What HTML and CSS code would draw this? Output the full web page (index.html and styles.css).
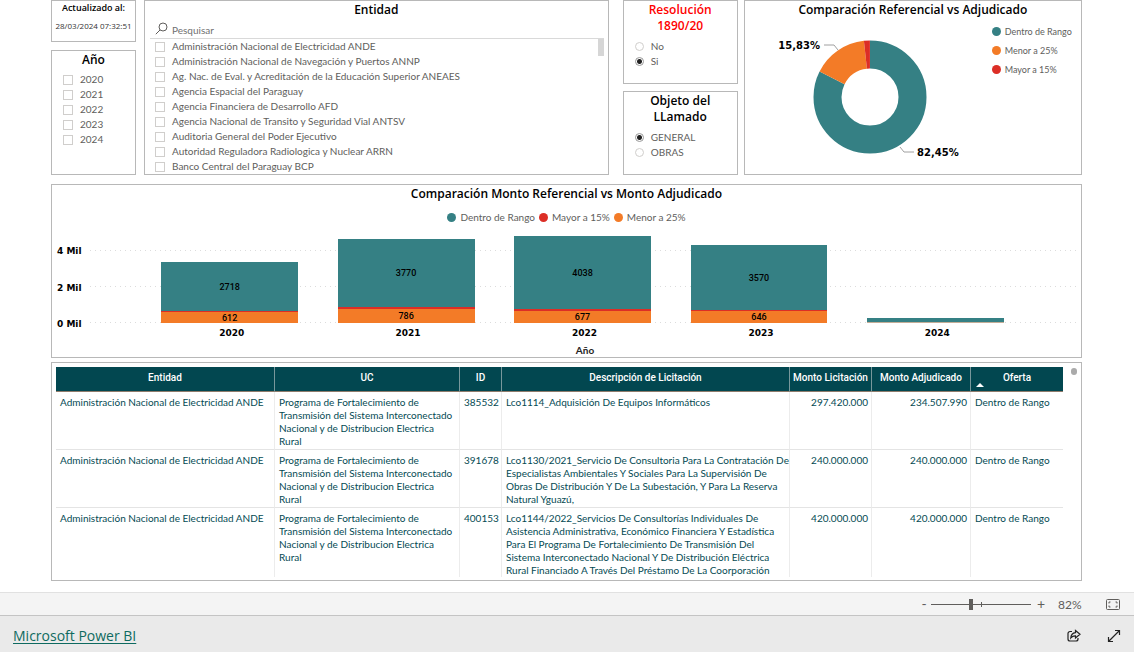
FILE: index.html
```html
<!DOCTYPE html>
<html lang="es">
<head>
<meta charset="utf-8">
<meta name="viewport" content="width=device-width, initial-scale=1">
<title>Microsoft Power BI</title>
<link rel="stylesheet" href="styles.css">
</head>
<body>
<main class="report">
  <div class="top-row">
    <div class="stack stack-year">
      <section class="card card-updated">
        <h2 class="mini-title">Actualizado al:</h2>
        <p class="timestamp">28/03/2024 07:32:51</p>
      </section>
      <fieldset class="card grow">
        <legend class="card-title">Año</legend>
        <div class="options options-year">
          <label class="option"><input type="checkbox">2020</label>
          <label class="option"><input type="checkbox">2021</label>
          <label class="option"><input type="checkbox">2022</label>
          <label class="option"><input type="checkbox">2023</label>
          <label class="option"><input type="checkbox">2024</label>
        </div>
      </fieldset>
    </div>

    <fieldset class="card card-entity">
      <legend class="card-title">Entidad</legend>
      <div class="search">
        <svg class="search-icon" viewBox="0 0 13 13" aria-hidden="true"><circle cx="8" cy="5" r="4"/><path d="M5 8L.8 12.2"/></svg>
        <input class="search-input" type="text" placeholder="Pesquisar" aria-label="Pesquisar">
      </div>
      <div class="entity-list">
        <div class="options options-entity">
          <label class="option"><input type="checkbox">Administración Nacional de Electricidad ANDE</label>
          <label class="option"><input type="checkbox">Administración Nacional de Navegación y Puertos ANNP</label>
          <label class="option"><input type="checkbox">Ag. Nac. de Eval. y Acreditación de la Educación Superior ANEAES</label>
          <label class="option"><input type="checkbox">Agencia Espacial del Paraguay</label>
          <label class="option"><input type="checkbox">Agencia Financiera de Desarrollo AFD</label>
          <label class="option"><input type="checkbox">Agencia Nacional de Transito y Seguridad Vial ANTSV</label>
          <label class="option"><input type="checkbox">Auditoria General del Poder Ejecutivo</label>
          <label class="option"><input type="checkbox">Autoridad Reguladora Radiologica y Nuclear ARRN</label>
          <label class="option"><input type="checkbox">Banco Central del Paraguay BCP</label>
        </div>
        <div class="list-thumb"></div>
      </div>
    </fieldset>

    <div class="stack stack-filters">
      <fieldset class="card grow">
        <legend class="card-title alert">Resolución 1890/20</legend>
        <div class="options options-radio">
          <label class="option"><input type="radio" name="res">No</label>
          <label class="option"><input type="radio" name="res" checked>Si</label>
        </div>
      </fieldset>
      <fieldset class="card grow">
        <legend class="card-title">Objeto del LLamado</legend>
        <div class="options options-radio">
          <label class="option"><input type="radio" name="obj" checked>GENERAL</label>
          <label class="option"><input type="radio" name="obj">OBRAS</label>
        </div>
      </fieldset>
    </div>

    <section class="card card-donut">
      <h2 class="card-title">Comparación Referencial vs Adjudicado</h2>
      <div class="donut-body">
        <svg class="donut" viewBox="0 0 200 135" role="img" aria-label="Dentro de Rango 82,45%, Menor a 25% 15,83%">
          <g fill="none" stroke-width="28">
            <circle cx="100" cy="67" r="42.5" stroke="#358084" pathLength="10000" stroke-dasharray="8245 10000" transform="rotate(-90 100 67)"/>
            <circle cx="100" cy="67" r="42.5" stroke="#f37b27" pathLength="10000" stroke-dasharray="1583 10000" transform="rotate(206.82 100 67)"/>
            <circle cx="100" cy="67" r="42.5" stroke="#dc2e26" pathLength="10000" stroke-dasharray="172 10000" transform="rotate(263.81 100 67)"/>
          </g>
          <path class="leader" d="M54 15h10l4 5M130 117l4 5h10"/>
          <text class="donut-label" x="50" y="19" text-anchor="end">15,83%</text>
          <text class="donut-label" x="147" y="126">82,45%</text>
        </svg>
        <ul class="legend legend-column">
          <li><span class="dot teal"></span>Dentro de Rango</li>
          <li><span class="dot orange"></span>Menor a 25%</li>
          <li><span class="dot red"></span>Mayor a 15%</li>
        </ul>
      </div>
    </section>
  </div>

  <section class="card card-bars">
    <h2 class="card-title">Comparación Monto Referencial vs Monto Adjudicado</h2>
    <ul class="legend legend-row">
      <li><span class="dot teal"></span>Dentro de Rango</li>
      <li><span class="dot red"></span>Mayor a 15%</li>
      <li><span class="dot orange"></span>Menor a 25%</li>
    </ul>
    <div class="chart">
      <div class="y-axis"><span>4 Mil</span><span>2 Mil</span><span>0 Mil</span></div>
      <div class="plot">
        <div class="gridlines"><i></i><i></i><i></i></div>
        <div class="bars">
          <div class="bar"><div class="seg teal" style="height:49px">2718</div><div class="seg red" style="height:1px"></div><div class="seg orange" style="height:11px">612</div></div>
          <div class="bar"><div class="seg teal" style="height:68px">3770</div><div class="seg red" style="height:2px"></div><div class="seg orange" style="height:14px">786</div></div>
          <div class="bar"><div class="seg teal" style="height:73px">4038</div><div class="seg red" style="height:2px"></div><div class="seg orange" style="height:12px">677</div></div>
          <div class="bar"><div class="seg teal" style="height:65px">3570</div><div class="seg red" style="height:1px"></div><div class="seg orange" style="height:12px">646</div></div>
          <div class="bar"><div class="seg teal" style="height:4px"></div><div class="seg tan" style="height:1px"></div></div>
        </div>
        <div class="x-axis"><span>2020</span><span>2021</span><span>2022</span><span>2023</span><span>2024</span></div>
        <div class="x-title">Año</div>
      </div>
    </div>
  </section>

  <section class="card card-table">
    <div class="table-view">
      <table class="data">
        <colgroup><col class="c-entity"><col class="c-uc"><col class="c-id"><col><col class="c-bid"><col class="c-award"><col class="c-offer"></colgroup>
        <thead>
          <tr><th>Entidad</th><th>UC</th><th>ID</th><th>Descripción de Licitación</th><th>Monto Licitación</th><th>Monto Adjudicado</th><th class="sorted">Oferta</th></tr>
        </thead>
        <tbody>
          <tr><td>Administración Nacional de Electricidad ANDE</td><td>Programa de Fortalecimiento de Transmisión del Sistema Interconectado Nacional y de Distribucion Electrica Rural</td><td>385532</td><td>Lco1114_Adquisición De Equipos Informáticos</td><td class="num">297.420.000</td><td class="num">234.507.990</td><td>Dentro de Rango</td></tr>
          <tr><td>Administración Nacional de Electricidad ANDE</td><td>Programa de Fortalecimiento de Transmisión del Sistema Interconectado Nacional y de Distribucion Electrica Rural</td><td>391678</td><td>Lco1130/2021_Servicio De Consultoria Para La Contratación De Especialistas Ambientales Y Sociales Para La Supervisión De Obras De Distribución Y De La Subestación, Y Para La Reserva Natural Yguazú,</td><td class="num">240.000.000</td><td class="num">240.000.000</td><td>Dentro de Rango</td></tr>
          <tr><td>Administración Nacional de Electricidad ANDE</td><td>Programa de Fortalecimiento de Transmisión del Sistema Interconectado Nacional y de Distribucion Electrica Rural</td><td>400153</td><td>Lco1144/2022_Servicios De Consultorías Individuales De Asistencia Administrativa, Económico Financiera Y Estadística Para El Programa De Fortalecimiento De Transmisión Del Sistema Interconectado Nacional Y De Distribución Eléctrica Rural Financiado A Través Del Préstamo De La Coorporación</td><td class="num">420.000.000</td><td class="num">420.000.000</td><td>Dentro de Rango</td></tr>
        </tbody>
      </table>
    </div>
    <div class="table-thumb"></div>
  </section>
</main>

<div class="zoom-bar">
  <button class="zoom-button" type="button" aria-label="Alejar">-</button>
  <input class="zoom-range" type="range" min="0" max="100" value="40" aria-label="Zoom">
  <button class="zoom-button" type="button" aria-label="Acercar">+</button>
  <span class="zoom-value">82%</span>
  <button class="icon-button" type="button" aria-label="Ajustar a la página">
    <svg width="14" height="11" viewBox="0 0 14 11"><rect x=".5" y=".5" width="13" height="10" rx="1"/><path d="M4.500 3H3v1.500M9.500 3h1.500v1.500M4.500 8H3V6.500M9.500 8h1.500V6.500"/></svg>
  </button>
</div>
<footer class="footer">
  <a class="brand" href="#">Microsoft Power BI</a>
  <div class="footer-actions">
    <button class="icon-button dark" type="button" aria-label="Compartir">
      <svg width="14" height="14" viewBox="0 0 14 14"><path d="M5 2.500H3a2 2 0 0 0-2 2V10a2 2 0 0 0 2 2h6a2 2 0 0 0 2-2V9"/><path d="M8.500 1.500L13 5.300 8.500 9V6.900C6.500 6.800 5 7.500 3.800 9c.2-3 1.900-5 4.700-5.300z"/></svg>
    </button>
    <button class="icon-button dark" type="button" aria-label="Pantalla completa">
      <svg width="14" height="14" viewBox="0 0 14 14"><path d="M1.500 12.500l11-11M8 1.500h4.500V6M1.500 8v4.500H6"/></svg>
    </button>
  </div>
</footer>
</body>
</html>
```
FILE: styles.css
```css
* { box-sizing: border-box; }

body {
  margin: 0;
  min-height: 100vh;
  display: flex;
  flex-direction: column;
  background: #fff;
  color: #000;
  font: 10px/15px Lato, "Noto Sans", sans-serif;
}

h2, p, ul { margin: 0; padding: 0; }
ul { list-style: none; }
button { border: 0; padding: 0; background: none; font: inherit; color: inherit; }

.report {
  flex: 1;
  display: flex;
  flex-direction: column;
  padding: 0 52px 11px 51px;
}

.card {
  margin: 0;
  padding: 0;
  min-width: 0;
  border: 1px solid #b8b8b8;
  background: #fff;
}

.card-title {
  display: block;
  width: 100%;
  padding: 1px 8px 0;
  font-family: "Open Sans", "Noto Sans", sans-serif;
  font-size: 12px;
  line-height: 16px;
  font-weight: 600;
  text-align: center;
}
fieldset .card-title { float: left; }
fieldset .card-title + * { clear: both; }
.alert { color: #f00; }

.top-row { display: flex; height: 175px; }
.stack { display: flex; flex-direction: column; }
.stack-year { width: 85px; margin-right: 8px; gap: 8px; }
.stack-filters { width: 115px; margin: 0 6px 0 14px; gap: 7px; }
.grow { flex: 1; }

.card-updated { height: 42px; text-align: center; }
.mini-title { font: 600 9px/14px "Open Sans", "Noto Sans", sans-serif; }
.timestamp {
  margin-top: 4px;
  font: 8px/14px "Open Sans", "Noto Sans", sans-serif;
  white-space: nowrap;
  color: #333;
}

.options { display: flex; flex-direction: column; color: #605e5c; }
.options-year { padding: 4px 11px; }
.options-radio { padding: 5px 11px; }
.option { display: flex; align-items: center; gap: 7px; height: 15px; white-space: nowrap; }
.option input {
  appearance: none;
  flex: none;
  width: 10px;
  height: 10px;
  margin: 0;
  border: 1px solid #d0cecc;
  background: #fff;
}
.option input[type="radio"] { width: 9px; height: 9px; border-radius: 50%; }
.option input[type="radio"]:checked { border-color: #999; background: radial-gradient(circle, #222 0 2px, #fff 3px); }

.card-entity { flex: 465; }
.search {
  display: flex;
  align-items: center;
  gap: 4px;
  height: 21px;
  margin: 0 4px 0 5px;
  padding-left: 5px;
  border-bottom: 1px solid #d9d9d9;
}
.search-icon { width: 13px; height: 13px; fill: none; stroke: #605e5c; }
.search-input { flex: 1; min-width: 0; border: 0; padding: 4px 0 0; background: none; font: inherit; outline: 0; }
.search-input::placeholder { color: #707070; opacity: 1; }
.entity-list { display: flex; justify-content: space-between; margin: 0 4px 0 10px; }
.list-thumb { width: 6px; height: 17px; background: #d6d6d6; }

.card-donut { flex: 338; }
.donut-body { display: flex; align-items: flex-start; }
.donut { flex: none; width: 200px; height: 135px; margin: 12px 22px 0 25px; }
.leader { fill: none; stroke: #a0a0a0; }
.donut-label { font: 700 10px "DejaVu Sans", sans-serif; }

.legend { display: flex; color: #605e5c; }
.legend li { display: flex; align-items: center; gap: 4px; white-space: nowrap; }
.legend-column { flex-direction: column; gap: 4px; padding-top: 6px; font-size: 9px; }
.legend-row { justify-content: center; gap: 4px; margin-top: 8px; }
.dot { width: 9px; height: 9px; border-radius: 50%; }

.teal { background: #358084; }
.orange { background: #f37b27; }
.red { background: #dc2e26; }
.tan { background: #c4ad97; }

.card-bars { margin-top: 9px; height: 174px; }
.chart { display: flex; margin-top: 9px; padding: 0 1px 0 5px; }
.y-axis {
  display: flex;
  flex-direction: column;
  justify-content: space-between;
  width: 33px;
  height: 88px;
  margin-top: 10px;
  font: 700 9px/15px "DejaVu Sans", sans-serif;
}
.plot { flex: 1; display: grid; grid-template-rows: 89px 20px 15px; }
.gridlines {
  grid-area: 1 / 1;
  align-self: end;
  display: flex;
  flex-direction: column;
  justify-content: space-between;
  height: 73px;
}
.gridlines i { height: 1px; background: repeating-linear-gradient(90deg, #dcdcdc 0 1px, transparent 1px 5px); }
.bars {
  grid-area: 1 / 1;
  z-index: 1;
  display: flex;
  align-items: flex-end;
  gap: 4.7%;
  padding: 0 7.7% 0 7.2%;
}
.bar { flex: 1; }
.seg {
  display: flex;
  align-items: center;
  justify-content: center;
  font: 500 9px/10px Roboto, "Noto Sans", sans-serif;
}
.x-axis {
  display: flex;
  gap: 4.7%;
  padding: 0 7.7% 0 7.2%;
  font: 700 9px/20px "DejaVu Sans", sans-serif;
  text-align: center;
}
.x-axis span { flex: 1; padding-left: 4px; }
.x-title { text-align: center; font-weight: 700; color: #252423; }

.card-table {
  display: flex;
  align-items: flex-start;
  margin-top: 4px;
  height: 219px;
  padding: 4px 4px 3px;
}
.table-view { flex: 1; height: 100%; overflow: hidden; }
.data {
  width: 100%;
  table-layout: fixed;
  border-collapse: separate;
  border-spacing: 0;
  line-height: 13px;
  color: #044a53;
}
.c-entity { width: 219px; }
.c-uc { width: 185px; }
.c-id { width: 42px; }
.c-bid { width: 82px; }
.c-award { width: 99px; }
.c-offer { width: 92px; }
.data th {
  position: relative;
  height: 25px;
  padding: 0 0 3px;
  background: #024750;
  border-bottom: 1px solid #8f7c6c;
  border-right: 1px solid #78979b;
  color: #fff;
  font-family: Roboto, "Noto Sans", sans-serif;
  font-weight: 500;
  white-space: nowrap;
}
.data td {
  height: 58px;
  padding: 4px 0 1px 4px;
  vertical-align: top;
  border-right: 1px solid #ececec;
  border-bottom: 1px solid #e4e4e4;
}
.data th:last-child, .data td:last-child { border-right: 0; }
.data .num { padding-right: 3px; text-align: right; }
.sorted::before {
  content: "";
  position: absolute;
  left: 5px;
  bottom: 4px;
  border: 4px solid transparent;
  border-top: 0;
  border-bottom-color: #fff;
}
.table-thumb { width: 6px; height: 7px; margin: 1px 0 0 8px; border-radius: 3px; background: #aaa; }

.zoom-bar {
  display: flex;
  align-items: center;
  justify-content: flex-end;
  height: 24px;
  padding-right: 14px;
  border-top: 1px solid #e1e1e1;
  border-bottom: 1px solid #c4c4c4;
  background: #f4f4f4;
  color: #605e5c;
}
.zoom-button { width: 14px; height: 20px; font-size: 14px; line-height: 20px; }
.zoom-range {
  appearance: none;
  width: 100px;
  height: 13px;
  margin: 0 3px 0 0;
  background:
    linear-gradient(#605e5c, #605e5c) 50px 50% / 1px 5px no-repeat,
    linear-gradient(#605e5c, #605e5c) 0 50% / 100% 1px no-repeat;
}
.zoom-range::-webkit-slider-thumb { appearance: none; width: 4px; height: 11px; background: #605e5c; }
.zoom-value { width: 58px; padding-left: 10px; font-size: 12px; }
.icon-button { display: flex; }
.icon-button svg { fill: none; stroke: #605e5c; }
.icon-button.dark svg { stroke: #222; stroke-width: 1.2; }

.footer {
  display: flex;
  align-items: center;
  justify-content: space-between;
  height: 36px;
  padding: 4px 13px 0;
  background: #eaeaea;
}
.brand { color: #0e6a60; font: 14px/20px "Open Sans", "Noto Sans", sans-serif; text-underline-offset: 2px; }
.footer-actions { display: flex; gap: 26px; }
```
